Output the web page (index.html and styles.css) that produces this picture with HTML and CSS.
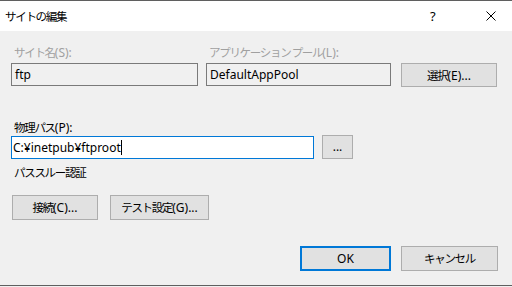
FILE: index.html
```html
<!DOCTYPE html>
<html lang="ja">
<head>
    <meta charset="UTF-8">
    <meta name="viewport" content="width=device-width, initial-scale=1.0">
    <title>サイトの編集</title>
    <link rel="stylesheet" href="styles.css">
</head>
<body>
    <div class="dialog">
        <div class="titlebar">
            <span class="title"><span class="ja">サイトの編集</span></span>
            <span class="help">?</span>
            <span class="close">
                <svg width="10" height="10" viewBox="0 0 10 10"><path d="M0.5 0.5L9.5 9.5M9.5 0.5L0.5 9.5" stroke="#000" stroke-width="1" fill="none"/></svg>
            </span>
        </div>
        <div class="content">
            <div class="row-site">
                <div class="field site">
                    <label class="label disabled"><span class="ja">サイト名</span>(S):</label>
                    <div class="input readonly">ftp</div>
                </div>
                <div class="field pool">
                    <label class="label disabled"><span class="ja">アプリケーション プール</span>(L):</label>
                    <div class="input readonly">DefaultAppPool</div>
                </div>
                <button class="btn select"><span class="ja">選択</span>(E)...</button>
            </div>

            <label class="label path-label"><span class="ja">物理パス</span>(P):</label>
            <div class="row-path">
                <div class="input focused">C:¥inetpub¥ftproot<span class="caret"></span></div>
                <button class="btn browse">...</button>
            </div>

            <div class="label auth-label"><span class="ja">パススルー認証</span></div>
            <div class="row-auth">
                <button class="btn connect"><span class="ja">接続</span>(C)...</button>
                <button class="btn test"><span class="ja">テスト設定</span>(G)...</button>
            </div>

            <div class="row-footer">
                <button class="btn ok default">OK</button>
                <button class="btn cancel"><span class="ja">キャンセル</span></button>
            </div>
        </div>
    </div>
</body>
</html>
```

FILE: styles.css
```css
html, body {
    margin: 0;
    padding: 0;
    background-color: #f0f0f0;
}
body {
    font-family: "Noto Sans", "Noto Sans CJK JP", sans-serif;
    font-size: 12px;
    color: #000;
}
.ja {
    font-family: "Noto Sans CJK JP", sans-serif;
    font-size: 11.5px;
    letter-spacing: -1.3px;
}
.dialog {
    width: 512px;
    height: 286px;
    box-sizing: border-box;
    border-top: 1px solid #5f5f5f;
    border-bottom: 1px solid #5f5f5f;
    background-color: #f0f0f0;
}
.titlebar {
    height: 30px;
    background-color: #fff;
    display: flex;
    align-items: center;
}
.title {
    padding-left: 5px;
    flex: 1;
}
.help {
    width: 8px;
    margin-right: 48px;
    font-size: 13px;
}
.close {
    width: 10px;
    height: 10px;
    margin-right: 16px;
    display: flex;
}
.content {
    padding: 13px 0 0 11px;
}
.label {
    display: block;
    height: 16px;
    line-height: 16px;
    padding-left: 3px;
    white-space: nowrap;
}
.disabled {
    color: #a0a0a0;
}
.row-site {
    display: flex;
    align-items: flex-start;
}
.field .input {
    margin-top: 3px;
}
.site {
    width: 187px;
    margin-right: 8px;
}
.pool {
    width: 185px;
    margin-right: 10px;
}
.input {
    box-sizing: border-box;
    height: 23px;
    line-height: 21px;
    padding-left: 3px;
    border: 1px solid #7a7a7a;
    background-color: #fff;
    white-space: nowrap;
}
.readonly {
    background-color: #f0f0f0;
}
.focused {
    width: 303px;
    padding-left: 1px;
    border-color: #0078d7;
}
.caret {
    display: inline-block;
    width: 1px;
    height: 15px;
    background-color: #000;
    vertical-align: -3px;
}
.btn {
    box-sizing: border-box;
    height: 25px;
    padding: 0;
    font: inherit;
    color: #000;
    background-color: #e1e1e1;
    border: 1px solid #adadad;
    white-space: nowrap;
}
.select {
    width: 96px;
    height: 24px;
    margin-top: 19px;
}
.path-label {
    margin-top: 32px;
}
.row-path {
    display: flex;
    align-items: flex-end;
    gap: 8px;
}
.browse {
    width: 31px;
    height: 24px;
    line-height: 14px;
}
.auth-label {
    margin-top: 5px;
}
.row-auth {
    display: flex;
    gap: 12px;
    margin-top: 15px;
    padding-left: 1px;
}
.connect {
    width: 86px;
}
.test {
    width: 99px;
}
.row-footer {
    display: flex;
    justify-content: flex-end;
    gap: 10px;
    margin-top: 26px;
    padding-right: 14px;
}
.ok {
    width: 91px;
}
.cancel {
    width: 97px;
}
.default {
    border: 2px solid #0078d7;
}
```
